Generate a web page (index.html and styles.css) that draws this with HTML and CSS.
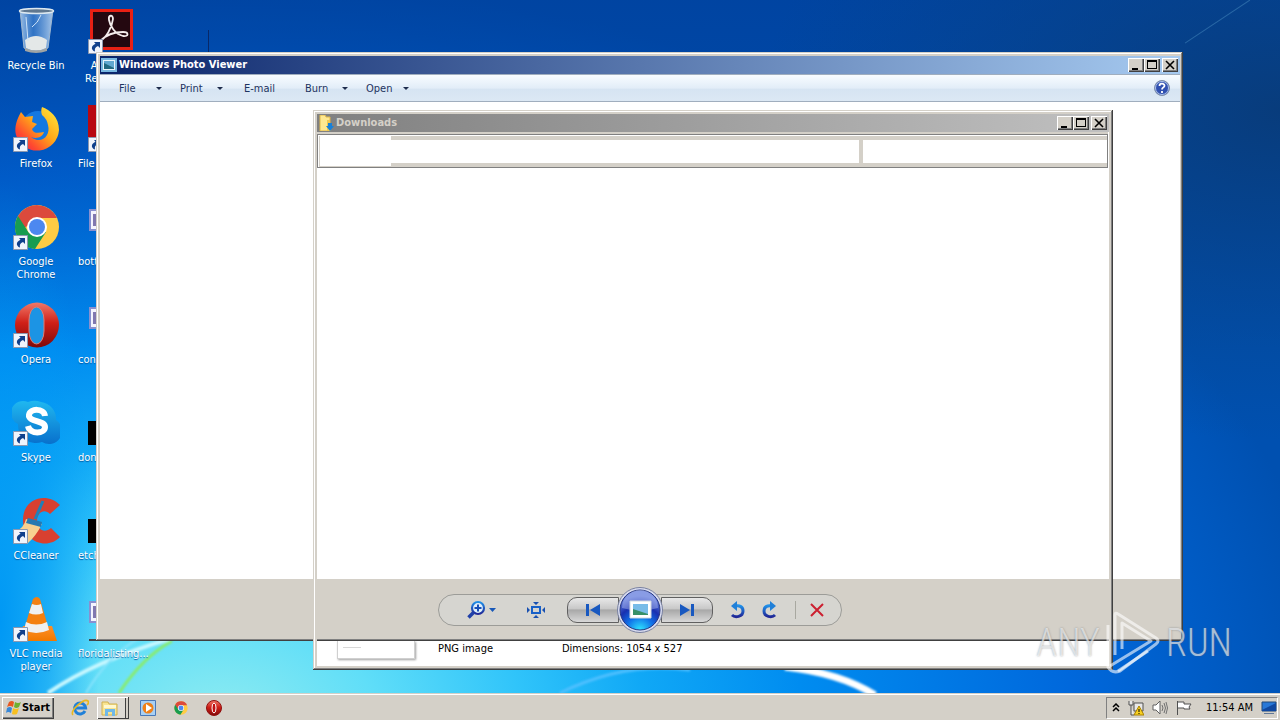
FILE: index.html
```
<!DOCTYPE html>
<html lang="en">
<head>
<meta charset="utf-8">
<title>Desktop</title>
<link rel="stylesheet" href="styles.css">
</head>
<body>
<svg class="defs" width="0" height="0" aria-hidden="true">
  <defs>
    <linearGradient id="red" x1="0" y1="0" x2="0" y2="1"><stop offset="0" stop-color="#f07868"/><stop offset=".45" stop-color="#d02018"/><stop offset="1" stop-color="#800808"/></linearGradient>
    <linearGradient id="fox" x1="1" y1="0" x2="0" y2="1"><stop offset="0" stop-color="#fff040"/><stop offset=".45" stop-color="#ffa818"/><stop offset=".75" stop-color="#ff4830"/><stop offset="1" stop-color="#e01868"/></linearGradient>
    <linearGradient id="sky" x1="0" y1="0" x2="0" y2="1"><stop offset="0" stop-color="#20b8f0"/><stop offset="1" stop-color="#0870cc"/></linearGradient>
    <linearGradient id="glass" x1="0" y1="0" x2="1" y2="0"><stop offset="0" stop-color="#b8d4f0" stop-opacity=".85"/><stop offset=".4" stop-color="#5090d8" stop-opacity=".6"/><stop offset="1" stop-color="#c4dcf4" stop-opacity=".85"/></linearGradient>
    <linearGradient id="pen" x1="0" y1="0" x2="0" y2="1"><stop offset="0" stop-color="#2090e8"/><stop offset="1" stop-color="#202898"/></linearGradient>
    <linearGradient id="orange" x1="0" y1="0" x2="0" y2="1"><stop offset="0" stop-color="#ff9028"/><stop offset="1" stop-color="#f07800"/></linearGradient>
    <symbol id="shortcut" viewBox="0 0 15 15"><path d="M.5.5h14v14H.5z" fill="#f0f4fc" stroke="#8c98b0"/><path d="M6 3h6v6l-2-2c-3 1-3.500 3-3 5.500C3 11 2.500 7 7.500 4.700z" fill="#10408c"/></symbol>
    <symbol id="chrome" viewBox="0 0 46 46"><circle cx="23" cy="23" r="22" fill="#ffcc44"/><path d="M43 14H23L8 26 4 12a22 22 0 0 1 39 2z" fill="#dc4a3c"/><path d="M4 12a22 22 0 0 0 17 33l11-17-17 1z" fill="#189c50"/><circle cx="23" cy="23" r="10" fill="#fff"/><circle cx="23" cy="23" r="8" fill="#4c88f0"/></symbol>
    <symbol id="opera" viewBox="0 0 46 46"><ellipse cx="23" cy="23" rx="22" ry="22.500" fill="url(#red)"/><rect x="15" y="5" width="15" height="37" rx="7.500" ry="13" fill="#1c94e4" stroke="#d88078"/></symbol>
    <symbol id="doc" viewBox="0 0 40 22"><path d="M1 1h38v20H1z" fill="#f4f4ff" stroke="#8890d0" stroke-width="2"/><path d="M4 5h16v12H4z" fill="#8078b0"/></symbol>
  </defs>
</svg>

<main class="desktop">
  <svg class="wallpaper" viewBox="0 0 1280 692" preserveAspectRatio="none" aria-hidden="true">
    <defs>
      <radialGradient id="glow" gradientUnits="userSpaceOnUse" cx="0" cy="0" r="1" gradientTransform="translate(220 720) scale(1120 740)">
        <stop offset="0" stop-color="#90ecf0"/><stop offset=".14" stop-color="#60def8"/><stop offset=".27" stop-color="#30c4fa"/><stop offset=".38" stop-color="#10a8f6"/><stop offset=".52" stop-color="#008cf0"/><stop offset=".76" stop-color="#0068dc"/><stop offset="1" stop-color="#0050b0"/>
      </radialGradient>
      <radialGradient id="leftshade"><stop offset="0" stop-color="#0098f4"/><stop offset=".5" stop-color="#0098f4" stop-opacity=".6"/><stop offset="1" stop-color="#0098f4" stop-opacity="0"/></radialGradient>
      <linearGradient id="topshade" x1="0" y1="0" x2="0" y2="1"><stop offset="0" stop-color="#003c98" stop-opacity=".6"/><stop offset="1" stop-color="#003c98" stop-opacity="0"/></linearGradient>
      <radialGradient id="corner"><stop offset="0" stop-color="#083c7c"/><stop offset="1" stop-color="#084488" stop-opacity="0"/></radialGradient>
      <filter id="soft"><feGaussianBlur stdDeviation="1"/></filter>
    </defs>
    <path d="M0 0h1280v692H0z" fill="url(#glow)"/>
    <ellipse cx="0" cy="620" rx="100" ry="440" fill="url(#leftshade)"/>
    <path d="M0 0h1280v350H0z" fill="url(#topshade)"/>
    <ellipse cx="1280" cy="110" rx="520" ry="330" fill="url(#corner)"/>
    <path d="M1185 43 1250 0" stroke="#4080b8" stroke-opacity=".6" fill="none"/>
    <path d="M208.500 30v22" stroke="#082868"/>
    <g fill="none" filter="url(#soft)">
      <path d="M48 692Q95 660 170 638" stroke="#c8f8ff" stroke-width="4"/>
      <path d="M86 692Q108 655 138 638" stroke="#88e4fc" stroke-width="2"/>
      <path d="M119 692Q143 656 172 640" stroke="#88ec70" stroke-width="3"/>
      <path d="M560 692Q625 660 690 669" stroke="#50c0ff" stroke-width="3"/>
      <path d="M785 666Q840 672 875 694" stroke="#fff" stroke-width="7"/>
    </g>
  </svg>

  <ul class="icons">
    <li class="shortcut"><svg class="art" viewBox="0 0 48 48"><path d="M8 3h33l-5 38q-12 6-24 0z" fill="url(#glass)" stroke="#a0b8d0"/><path d="M13 33q11-8 22 0l-1 8q-10 5-20 0z" fill="#e4e8e8"/><ellipse cx="24.500" cy="4" rx="17" ry="2.500" fill="#607890" stroke="#dce8f0" stroke-width="1.500"/><path d="M14 10l2 24M29 8q-3 8-9 12" stroke="#d0e4f8" fill="none"/><path d="M13 41q11 5 22 0v3q-11 4-22 0z" fill="#a0a4a4"/></svg><span>Recycle Bin</span></li>
    <li class="shortcut cut"><svg class="art" viewBox="0 0 48 48"><path d="M4.500 3.500h40v38h-40z" fill="#240810" stroke="#e82014" stroke-width="3"/><path d="M13 34c6-3 12-13 13-22 0-5-5-4-4 1 1 6 6 14 14 16 6 1 6-4 0-4-8 0-17 3-23 9z" fill="none" stroke="#f4ecec" stroke-width="1.800"/><use href="#shortcut" x="1" y="32" width="15" height="15"/></svg><span>A<br>Re</span></li>

    <li class="shortcut"><svg class="art" viewBox="0 0 48 48"><circle cx="26" cy="23" r="17" fill="#1478e0"/><path d="M30 2c8 3 17 10 17 23a22 22 0 0 1-43 5C2 22 5 14 9 7l4 5 8-1-1 6 5 2-5 5c1 5 7 4 12 3-2 6-8 7-13 5 10 8 20-1 17-12q-1-6-6-10c-1-3-1-5 0-8z" fill="url(#fox)"/><use href="#shortcut" x="1" y="32" width="15" height="15"/></svg><span>Firefox</span></li>
    <li class="shortcut side"><svg class="art" viewBox="0 0 48 48"><path d="M1 0h44v46H1z" fill="#b80810"/><use href="#shortcut" x="1" y="32" width="15" height="15"/></svg><span>File</span></li>

    <li class="shortcut"><svg class="art" viewBox="0 0 48 48"><use href="#chrome" x="2" y="1" width="46" height="46"/><use href="#shortcut" x="1" y="32" width="15" height="15"/></svg><span>Google<br>Chrome</span></li>
    <li class="shortcut side"><svg class="art" viewBox="0 0 48 48"><use href="#doc" x="2" y="6" width="40" height="22"/></svg><span>bott</span></li>

    <li class="shortcut"><svg class="art" viewBox="0 0 48 48"><use href="#opera" x="2" y="1" width="46" height="46"/><use href="#shortcut" x="1" y="32" width="15" height="15"/></svg><span>Opera</span></li>
    <li class="shortcut side"><svg class="art" viewBox="0 0 48 48"><use href="#doc" x="2" y="6" width="40" height="22"/></svg><span>con</span></li>

    <li class="shortcut"><svg class="art" viewBox="0 0 48 48"><path d="M16 3a17 17 0 0 1 13 0A17 17 0 0 1 44 21 12 12 0 0 1 30 43 18 18 0 0 1 6 25 12 12 0 0 1 16 3z" fill="url(#sky)"/><path d="M33 17c-1-8-15-8-16-1s16 5 16 12-15 8-17-1" fill="none" stroke="#fff" stroke-width="6"/><use href="#shortcut" x="1" y="32" width="15" height="15"/></svg><span>Skype</span></li>
    <li class="shortcut side"><svg class="art" viewBox="0 0 48 48"><path d="M1 22h46v24H1z"/></svg><span>don</span></li>

    <li class="shortcut"><svg class="art" viewBox="0 0 48 48"><path d="m48 8-10 9c-6-6-13-1-13 7s7 13 14 7l9 9C36 53 11 46 11 23S36-5 48 8z" fill="#d84030"/><path d="M14 22q7 3 16 5-6 12-14 19L3 35q9-4 11-13z" fill="#f8d090"/><path d="m16 21 14 4-1 5-15-4z" fill="#2878b0"/><path d="m31 4-8 18" stroke="#2080b8" stroke-width="3"/><use href="#shortcut" x="1" y="32" width="15" height="15"/></svg><span>CCleaner</span></li>
    <li class="shortcut side"><svg class="art" viewBox="0 0 48 48"><path d="M1 22h46v24H1z"/></svg><span>etch</span></li>

    <li class="shortcut"><svg class="art" viewBox="0 0 48 48"><path d="M11 31h29l5 15H8z" fill="url(#orange)"/><path d="M21 4q4-4 7 0l9 31q-13 7-25 0z" fill="#f48010"/><path d="m20 9-3 9q7 3 14 0l-2-9q-4 2-9 0zM14 27l-2 8q12 6 25 0l-2-8q-11 5-21 0z" fill="#f0f0f0"/><use href="#shortcut" x="1" y="32" width="15" height="15"/></svg><span>VLC media<br>player</span></li>
    <li class="shortcut side"><svg class="art" viewBox="0 0 48 48"><use href="#doc" x="2" y="6" width="40" height="22"/><path d="M2 44h44v2H2z" fill="#404850"/></svg><span>floridalisting...</span></li>
  </ul>

  <section class="window viewer">
    <header class="titlebar active">
      <svg width="16" height="16" viewBox="0 0 16 16"><path d="M1 2h14v12H1z" fill="#e8f4fc" stroke="#78b8e0" stroke-width="2"/><path d="M3 4h10v8H3z" fill="#60a8d0"/><path d="m3 6 10 5v1H3z" fill="#206880"/></svg>
      <h1>Windows Photo Viewer</h1>
      <div class="controls">
        <button aria-label="Minimize"><svg viewBox="0 0 12 10"><path d="M2 8h6v2H2z"/></svg></button><button aria-label="Maximize"><svg viewBox="0 0 12 10"><path d="M1 0h10v9H1zM2 2v6h8V2z" fill-rule="evenodd"/></svg></button><button class="close" aria-label="Close"><svg viewBox="0 0 12 10"><path d="m2 1 8 8m0-8L2 9" stroke="#000" stroke-width="1.600"/></svg></button>
      </div>
    </header>
    <nav class="menubar">
      <button class="drop">File</button><button class="drop">Print</button><button class="mail">E-mail</button><button class="drop">Burn</button><button class="drop">Open</button>
      <button class="help" aria-label="Help"><svg width="16" height="16" viewBox="0 0 16 16"><circle cx="8" cy="8" r="7.500" fill="#3050b0" stroke="#8090a8"/><circle cx="8" cy="8" r="6.500" fill="none" stroke="#b0c4ec"/><path d="M5.500 6c0-3 5-3 5-.3 0 1.800-2.500 1.600-2.500 3.800m0 1.500v2" fill="none" stroke="#fff" stroke-width="1.800"/></svg></button>
    </nav>
    <div class="canvas"></div>
    <footer class="playbar">
      <div class="pill">
        <button class="zoom" aria-label="Zoom"><svg width="30" height="20" viewBox="0 0 30 20"><circle cx="11" cy="8" r="6" fill="#e0f0fc" stroke="url(#pen)" stroke-width="2.200"/><path d="M11 4.500v7M7.500 8h7" stroke="#1850b8" stroke-width="2"/><path d="m6.500 12.500-5 5" stroke="#2040a8" stroke-width="3.500"/><path d="M22 8h7l-3.500 4z" fill="#1858b8"/></svg></button>
        <button class="fit" aria-label="Actual size"><svg width="18" height="16" viewBox="0 0 18 16"><path d="M5 5h8v6H5z" fill="none" stroke="#1860c8" stroke-width="2"/><path d="M6 0h6L9 3zM6 16h6l-3-3zM0 5v6l3-3zM18 5v6l-3-3z" fill="#1850b0"/></svg></button>
        <div class="transport">
          <button class="step" aria-label="Previous"><svg width="16" height="12" viewBox="0 0 16 12"><path d="M1 0h3v12H1zM15 0v12L5 6z" fill="#1858c0"/></svg></button>
          <button class="play" aria-label="Play slide show"><svg width="48" height="48" viewBox="0 0 48 48"><defs><radialGradient id="orb" cx=".5" cy="1" r=".85"><stop offset="0" stop-color="#30e8ff"/><stop offset=".4" stop-color="#1070e8"/><stop offset=".7" stop-color="#1830b0"/><stop offset="1" stop-color="#6078d8"/></radialGradient></defs><circle cx="24" cy="24" r="22.500" fill="#d8dcf0" stroke="#7880a0"/><circle cx="24" cy="24" r="20" fill="url(#orb)" stroke="#283880"/><path d="M6 22a18 18 0 0 1 36 0q-18 5-36 0z" fill="#d8e0ff" opacity=".35"/><path d="M14 15h21v17H14z" fill="#fff" stroke="#d0d8e0"/><path d="M17 18h15v11H17z" fill="#78bce8"/><path d="m17 23 15 5v1H17z" fill="#389068"/></svg></button>
          <button class="step" aria-label="Next"><svg width="16" height="12" viewBox="0 0 16 12"><path d="M12 0h3v12h-3zM1 0v12l10-6z" fill="#1858c0"/></svg></button>
        </div>
        <button class="turn" aria-label="Rotate counterclockwise"><svg width="16" height="18" viewBox="0 0 16 18"><path d="M6 5c5-1 8 1 8 5 0 6-8 7-11 4" fill="none" stroke="url(#pen)" stroke-width="3"/><path d="M8 0v10L2 5z" fill="#2080d8"/></svg></button>
        <button class="turn" aria-label="Rotate clockwise"><svg width="16" height="18" viewBox="0 0 16 18"><path d="M10 5c-5-1-8 1-8 5 0 6 8 7 11 4" fill="none" stroke="url(#pen)" stroke-width="3"/><path d="M8 0v10l6-5z" fill="#2080d8"/></svg></button>
        <i class="rule"></i>
        <button class="delete" aria-label="Delete"><svg width="14" height="14" viewBox="0 0 14 14"><path d="m1 1 12 12m0-12L1 13" stroke="#cc2030" stroke-width="2"/></svg></button>
      </div>
    </footer>
  </section>

  <section class="window downloads">
    <header class="titlebar">
      <svg width="16" height="16" viewBox="0 0 16 16"><path d="M2 0h5l1 2h4v14H2z" fill="#ffe890" stroke="#e0b848"/><path d="M9 5h3v11H9z" fill="#f0c850"/><path d="M10 8h4v3h2l-4 5-4-5h2z" fill="#1880d8"/></svg>
      <h2>Downloads</h2>
      <div class="controls">
        <button aria-label="Minimize"><svg viewBox="0 0 12 10"><path d="M2 8h6v2H2z"/></svg></button><button aria-label="Maximize"><svg viewBox="0 0 12 10"><path d="M1 0h10v9H1zM2 2v6h8V2z" fill-rule="evenodd"/></svg></button><button class="close" aria-label="Close"><svg viewBox="0 0 12 10"><path d="m2 1 8 8m0-8L2 9" stroke="#000" stroke-width="1.600"/></svg></button>
      </div>
    </header>
    <div class="strip"><i class="nav"></i><i class="address"></i><i class="search"></i></div>
    <div class="canvas"></div>
    <div class="gap"></div>
    <div class="details"><i class="thumb"></i><span class="kind">PNG image</span><span>Dimensions: 1054 x 527</span></div>
  </section>
</main>

<div class="watermark"><span>ANY</span><svg width="54" height="64" viewBox="0 0 54 64"><g fill="none" stroke="#fff" stroke-opacity=".6" stroke-width="3" stroke-linejoin="round"><path d="M9 44V4q0-3 3-1l38 24q4 3 0 6L14 60q-8 3-12-4V14"/><path d="M16 38V12l29 18L4 55M12 60l30-20"/></g></svg><span>RUN</span></div>

<footer class="taskbar">
  <button class="start"><svg width="16" height="16" viewBox="0 0 16 16"><path d="M3 2q3-2 5 0L7 7Q4 5 1 7z" fill="#e85820"/><path d="M9 2q3 2 6 0l-2 5q-3 2-5 0z" fill="#70b030"/><path d="M1 8q3-2 5 0l-1 5q-3-2-5 0z" fill="#3888d8"/><path d="M7 8q3 2 6 0l-2 6q-3 1-5 0z" fill="#f8c020"/></svg>Start</button>
  <button class="task" aria-label="Internet Explorer"><svg width="18" height="18" viewBox="0 0 18 18"><path d="M14 12a5.500 5.500 0 1 1 .6-3H5" fill="none" stroke="#2080d8" stroke-width="3"/><path d="M2 16C-2 12 13-1 17 2c1 1 0 3-1 4" fill="none" stroke="#e8b820" stroke-width="1.600"/></svg></button>
  <button class="task open" aria-label="Explorer"><svg width="18" height="16" viewBox="0 0 18 16"><path d="M1 2h6l1 2h8v11H1z" fill="#f8e490" stroke="#d0b050"/><path d="M3 5h12v3H3z" fill="#fff8d0"/><path d="M4 16V9h10v7h-3v-4H7v4z" fill="#70b8e8"/></svg></button>
  <button class="task media" aria-label="Media Player"><svg width="16" height="16" viewBox="0 0 16 16"><path d="M.5.5h15v15H.5z" fill="#a8d0f4" stroke="#4878b8"/><circle cx="8" cy="8" r="5.500" fill="#f08018"/><path d="m6 4 6 4-6 4z" fill="#fff"/></svg></button>
  <button class="task" aria-label="Chrome"><svg width="14" height="14"><use href="#chrome" width="14" height="14"/></svg></button>
  <button class="task" aria-label="Opera"><svg width="16" height="16" viewBox="0 0 16 16"><circle cx="8" cy="8" r="7.500" fill="url(#red)" stroke="#901010"/><ellipse cx="8" cy="8" rx="2" ry="5" fill="#c01010" stroke="#fff"/></svg></button>
  <div class="tray">
    <svg width="8" height="10" viewBox="0 0 8 10"><path d="m1 4 3-3 3 3M1 8l3-3 3 3" fill="none" stroke="#000" stroke-width="1.500"/></svg>
    <svg width="16" height="16" viewBox="0 0 16 16"><path d="M1 1v4h4V1M3 5v10h3M6 3h9v8H6z" fill="#e8e8e8" stroke="#505050"/><path d="m11 6 5 9H6z" fill="#f8d020" stroke="#a88000"/><path d="M11 9v3m0 1v1" stroke="#000"/></svg>
    <svg width="16" height="16" viewBox="0 0 16 16"><path d="M1 5h3l4-4v13l-4-4H1z" fill="#fff" stroke="#606060"/><path d="M10 5q2 3 0 6m2-8q3 5 0 10m2-11q3 6 0 12" fill="none" stroke="#707070"/></svg>
    <svg width="16" height="16" viewBox="0 0 16 16"><path d="M1.500 1v14M2 2h6v2h7l-2 3 1 2H8V8H2" fill="#fff" stroke="#505050"/></svg>
    <time>11:54 AM</time>
    <svg width="16" height="14" viewBox="0 0 16 14"><path d="M1 1h14v9H1z" fill="#2878d8" stroke="#204878"/><path d="m1 9 14-7v8H1z" fill="#1048a0"/><path d="M3 12h10v1H3z" fill="#607898"/></svg>
  </div>
</footer>
</body>
</html>
```
FILE: styles.css
```
* { box-sizing: border-box; }
body {
  margin: 0;
  min-height: 100vh;
  display: flex;
  flex-direction: column;
  overflow: hidden;
  position: relative;
  font: 11px/13px "DejaVu Sans Condensed", "DejaVu Sans", sans-serif;
}
button { font: inherit; color: inherit; border: 0; padding: 0; background: none; display: flex; flex: none; align-items: center; justify-content: center; }
svg { display: block; flex: none; }
i { display: block; }
.defs { position: absolute; }
.desktop { flex: 1; position: relative; overflow: hidden; background: #0068d8; }
.wallpaper { position: absolute; inset: 0; width: 100%; height: 100%; }

.icons {
  position: relative;
  margin: 0;
  padding: 7px 0 0;
  list-style: none;
  display: grid;
  grid-template-columns: 72px 74px;
  column-gap: 2px;
  grid-auto-rows: 98px;
}
.shortcut {
  display: flex;
  flex-direction: column;
  align-items: center;
  gap: 4px;
  color: #fff;
  text-align: center;
  text-shadow: 0 1px 1px #0058a0;
  white-space: nowrap;
}
.art { width: 48px; height: 48px; }
.side span { align-self: stretch; text-align: left; padding-left: 4px; }
.cut span { align-self: flex-start; text-align: right; padding-left: 11px; }

.window {
  position: absolute;
  display: flex;
  flex-direction: column;
  border: solid #404040;
  border-width: 0 1px 1px 0;
  box-shadow: inset 1px 1px #d4d0c8, inset -1px -1px #808080, inset 2px 2px #fff, inset -3px -3px #d4d0c8, inset 4px 4px #d4d0c8;
}
.viewer { inset: 52px 97px 52px 96px; padding: 4px 2px 2px 4px; background: #d4d0c8; }
.downloads { inset: 110px 167px 23px 313px; padding: 4px 3px 3px 4px; }
.titlebar {
  height: 18px;
  flex: none;
  display: flex;
  align-items: center;
  gap: 2px;
  padding: 0 2px 0 1px;
  color: #d4d0c8;
  background: linear-gradient(90deg, #808080, #c0c0c0);
}
.titlebar.active { color: #fff; background: linear-gradient(90deg, #0a246a, #a6caf0); }
.titlebar h1, .titlebar h2 { margin: 0; font: bold 11px/16px "DejaVu Sans Condensed", "DejaVu Sans", sans-serif; }
.controls { display: flex; margin-left: auto; }
.controls button {
  width: 16px;
  height: 14px;
  background: #d4d0c8;
  box-shadow: inset 1px 1px #fff, inset -1px -1px #404040, inset -2px -2px #808080;
}
.controls .close { margin-left: 2px; }
.controls svg { width: 12px; height: 10px; }

.menubar {
  height: 28px;
  flex: none;
  display: flex;
  align-items: center;
  padding: 0 10px 0 19px;
  color: #1e3460;
  border: solid #a0aebe;
  border-width: 1px 0;
  background: linear-gradient(#f8fcff, #e2edf8 50%, #d6e4f2 55%, #dce8f4);
}
.drop { width: 43px; justify-content: space-between; margin-right: 18px; }
.drop::after { content: ""; border: 3px solid transparent; border-top-color: #1e2c4c; border-bottom: 0; }
.mail { margin: 0 30px 0 3px; }
.help { margin-left: auto; }
.canvas { flex: 1; background: #fff; }
.playbar { height: 59px; flex: none; display: flex; align-items: center; justify-content: center; padding-top: 3px; }
.pill {
  width: 404px;
  height: 32px;
  display: flex;
  align-items: center;
  padding: 0 18px 0 28px;
  border: 1px solid #9c9c98;
  border-radius: 16px;
  background: #d6d5d0;
}
.zoom { margin-right: 30px; }
.fit { margin-right: 22px; }
.transport { display: flex; align-items: center; margin-right: 16px; }
.step {
  width: 52px;
  height: 26px;
  border: 1px solid #606060;
  border-radius: 10px 0 0 10px;
  background: linear-gradient(#e8e8e8, #c8c8c8 45%, #a8a8a8 50%, #d8d8d8);
}
.step:last-child { border-radius: 0 10px 10px 0; }
.play { margin: -8px -3px; position: relative; }
.turn { margin-right: 17px; }
.rule { width: 1px; height: 18px; flex: none; margin-right: 14px; background: #a8a8a0; }

.strip {
  height: 34px;
  flex: none;
  display: flex;
  align-items: center;
  margin-top: 2px;
  margin-right: 1px;
  padding-left: 2px;
  border: 1px solid #808080;
  background: #d4d0c8;
  box-shadow: inset 1px 1px #fff, 0 -2px #d4d0c8;
}
.strip i { background: #fff; height: 23px; }
.strip .nav { width: 71px; height: 30px; }
.strip .address { flex: 1; margin-right: 4px; }
.strip .search { width: 244px; }
.gap { height: 62px; flex: none; }
.details { height: 25px; flex: none; display: flex; align-items: flex-start; background: #fff; line-height: 16px; }
.thumb { width: 78px; height: 18px; margin: 0 23px 0 20px; border: 1px solid #d0d0d0; border-top: 0; box-shadow: 1px 1px 2px #a0a0a0; }
.thumb::before { content: ""; display: block; width: 18px; height: 1px; margin: 6px 5px; background: #d8d8d8; }
.kind { width: 124px; }

.watermark {
  position: absolute;
  right: 48px;
  bottom: 46px;
  display: flex;
  align-items: center;
  gap: 6px;
  color: rgba(255, 255, 255, .6);
  font: 300 38px/44px "Roboto Condensed", "Open Sans Condensed", Roboto, sans-serif;
  text-shadow: 0 0 2px rgba(90, 100, 110, .6);
  pointer-events: none;
}

.taskbar {
  height: 28px;
  flex: none;
  position: relative;
  display: flex;
  align-items: center;
  padding: 1px 2px 0;
  background: #d4d0c8;
  box-shadow: inset 0 1px #d4d0c8, inset 0 2px #fff;
}
.start {
  width: 52px;
  height: 22px;
  margin-right: 17px;
  font-weight: bold;
  background: #d4d0c8;
  box-shadow: inset 1px 1px #fff, inset -1px -1px #404040, inset -2px -2px #808080;
}
.task { width: 18px; height: 22px; margin-right: 15px; }
.task.open {
  width: 32px;
  margin: 0 10px 0 -7px;
  padding-right: 5px;
  border-right: 1px solid #404040;
  background: #dedbd5;
  box-shadow: inset 1px 1px #fff, inset 0 -1px #404040, inset -2px 0 #d4d0c8, inset -3px 0 #404040;
}
.tray {
  height: 22px;
  margin-left: auto;
  display: flex;
  align-items: center;
  gap: 8px;
  padding: 0 0 0 5px;
  border: 1px solid #808080;
  border-right-color: #fff;
  border-bottom-color: #fff;
}
.tray time { margin-left: 6px; }
```
